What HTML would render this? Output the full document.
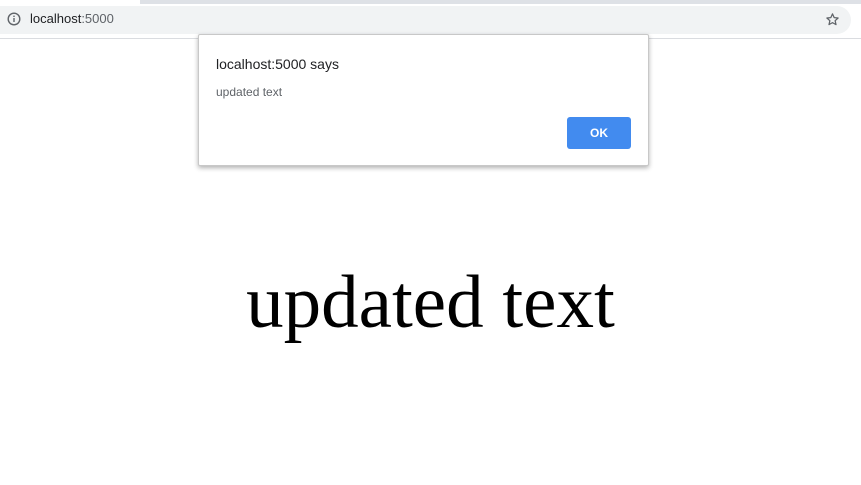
<!DOCTYPE html>
<html><head><style>
html,body{margin:0;padding:0;width:861px;height:485px;overflow:hidden;background:#fff;position:relative}
.top{position:absolute;left:140px;top:0;width:721px;height:4px;background:#dee1e6}
.pill{position:absolute;left:-20px;top:6px;width:871px;height:28px;border-radius:14px;background:#f1f3f4}
.line{position:absolute;left:0;top:38px;width:861px;height:1px;background:#dadce0}
.url{position:absolute;left:30px;top:11px;font:13px "Liberation Sans",sans-serif;color:#202124}
.url span{color:#5f6368}
.dlg{position:absolute;left:198px;top:34px;width:449px;height:130px;background:#fff;border:1px solid #c8c8c8;border-radius:2px;box-shadow:0 2px 5px rgba(0,0,0,.3)}
.t{position:absolute;left:17px;top:21px;font:14px "Liberation Sans",sans-serif;color:#202124}
.b{position:absolute;left:17px;top:50px;font:12px "Liberation Sans",sans-serif;color:#5f6368}
.ok{position:absolute;left:368px;top:82px;width:64px;height:32px;background:#428bef;border-radius:3px;color:#fff;font:bold 12px "Liberation Sans",sans-serif;text-align:center;line-height:32px}
.big{position:absolute;left:0;width:861px;top:258px;text-align:center;font:75px "Liberation Serif",serif;color:#000;line-height:90px}
</style></head><body>
<div class="top"></div>
<div class="pill"></div>
<div class="line"></div>
<svg style="position:absolute;left:7px;top:12px" width="14" height="14" viewBox="0 0 14 14"><circle cx="7" cy="7" r="5.8" fill="none" stroke="#5f6368" stroke-width="1.4"/><rect x="6.3" y="6" width="1.4" height="4" fill="#5f6368"/><rect x="6.3" y="3.6" width="1.4" height="1.4" fill="#5f6368"/></svg>
<div class="url">localhost<span>:5000</span></div>
<svg style="position:absolute;left:825px;top:12px" width="15" height="15" viewBox="0 0 24 24"><path d="M12 3l2.7 6 6.3.6-4.8 4.3 1.4 6.3L12 17l-5.6 3.2 1.4-6.3L3 9.6 9.3 9z" fill="none" stroke="#5f6368" stroke-width="2" stroke-linejoin="round"/></svg>
<div class="dlg"><div class="t">localhost:5000 says</div><div class="b">updated text</div><div class="ok">OK</div></div>
<div class="big">updated text</div>
</body></html>
